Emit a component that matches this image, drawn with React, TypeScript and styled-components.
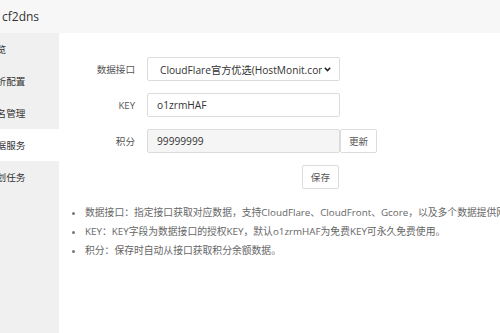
import styled, { createGlobalStyle } from "styled-components";

const GlobalStyle = createGlobalStyle`
  html, body {
    margin: 0;
    padding: 0;
    height: 100%;
    overflow: hidden;
    background: #ffffff;
    font-family: "Open Sans", "Noto Sans CJK SC", sans-serif;
    color: #333333;
  }
  #root {
    height: 100%;
  }
`;

const Frame = styled.div`
  margin-left: -33px;
  width: calc(100% + 33px);
  height: 100%;
  display: grid;
  grid-template-rows: 33px 1fr;
  grid-template-columns: 92px 1fr;
`;

const Header = styled.header`
  grid-column: 1 / span 2;
  display: flex;
  align-items: center;
  padding-left: 35px;
  background: #f7f7f7;
  font-size: 12px;
  color: #333333;
`;

const Sidebar = styled.nav`
  background: #f0f0f0;
  display: flex;
  flex-direction: column;
`;

const NavItem = styled.div<{ $active?: boolean }>`
  height: 32px;
  display: flex;
  align-items: center;
  padding-left: 20px;
  font-size: 9.6px;
  color: #333333;
  white-space: nowrap;
  background: ${(p) => (p.$active ? "#ffffff" : "transparent")};
`;

const Main = styled.main`
  padding-top: 24px;
  min-width: 0;
`;

const Form = styled.div`
  display: grid;
  grid-template-columns: 76px 193px auto;
  column-gap: 12px;
  row-gap: 12px;
  align-items: center;
  justify-content: start;
`;

const Label = styled.label`
  text-align: right;
  font-size: 9.6px;
  color: #555555;
`;

const Field = styled.div<{ $disabled?: boolean }>`
  height: 24px;
  box-sizing: border-box;
  border: 1px solid #dcdcdc;
  border-radius: 2px;
  background: ${(p) => (p.$disabled ? "#f5f5f5" : "#ffffff")};
  display: flex;
  align-items: center;
  padding: 0 8px 0 9px;
  font-size: 10.2px;
  color: #333333;
  white-space: nowrap;
  overflow: hidden;
`;

const SelectText = styled.span`
  flex: 1;
  overflow: hidden;
  padding-left: 3px;
`;

const Chevron = styled.svg`
  width: 7px;
  height: 5px;
  flex: none;
  margin-left: 2px;
`;

const Button = styled.button`
  height: 24px;
  box-sizing: border-box;
  padding: 0 8px;
  border: 1px solid #dcdcdc;
  border-radius: 2px;
  background: #ffffff;
  font-family: inherit;
  font-size: 9.6px;
  color: #555555;
  margin-left: -12px;
  justify-self: start;
`;

const SaveButton = styled(Button)`
  grid-column: 2;
  justify-self: end;
  margin-left: 0;
  margin-right: 1px;
`;

const Notes = styled.ul`
  margin: 14px 0 0;
  padding-left: 26px;
  font-size: 9.8px;
  line-height: 19px;
  color: #666666;
  white-space: nowrap;
  li::marker {
    font-size: 9px;
    color: #777777;
  }
`;

export default function App() {
  return (
    <>
      <GlobalStyle />
      <Frame>
        <Header>cf2dns</Header>
        <Sidebar>
          <NavItem>总览</NavItem>
          <NavItem>解析配置</NavItem>
          <NavItem>域名管理</NavItem>
          <NavItem $active>数据服务</NavItem>
          <NavItem>计划任务</NavItem>
        </Sidebar>
        <Main>
          <Form>
            <Label>数据接口</Label>
            <Field>
              <SelectText>CloudFlare官方优选(HostMonit.com)</SelectText>
              <Chevron viewBox="0 0 7 5">
                <path d="M0.8 0.8 L3.5 3.6 L6.2 0.8" fill="none" stroke="#222" strokeWidth="1.5" />
              </Chevron>
            </Field>
            <span />
            <Label>KEY</Label>
            <Field>o1zrmHAF</Field>
            <span />
            <Label>积分</Label>
            <Field $disabled>99999999</Field>
            <Button>更新</Button>
            <SaveButton>保存</SaveButton>
          </Form>
          <Notes>
            <li>数据接口：指定接口获取对应数据，支持CloudFlare、CloudFront、Gcore，以及多个数据提供网站。</li>
            <li>KEY：KEY字段为数据接口的授权KEY，默认o1zrmHAF为免费KEY可永久免费使用。</li>
            <li>积分：保存时自动从接口获取积分余额数据。</li>
          </Notes>
        </Main>
      </Frame>
    </>
  );
}
